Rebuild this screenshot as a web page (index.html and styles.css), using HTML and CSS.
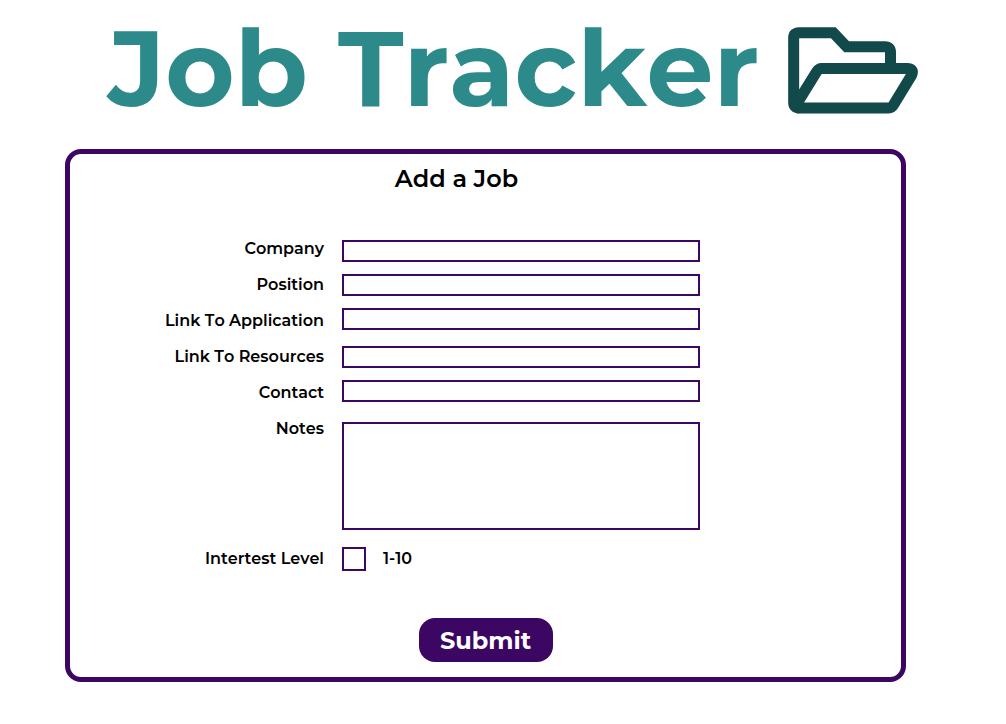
FILE: index.html
```html
<!DOCTYPE html>
<html lang="en">
<head>
<meta charset="utf-8">
<meta name="viewport" content="width=device-width, initial-scale=1">
<title>Job Tracker</title>
<link rel="stylesheet" href="styles.css">
</head>
<body>
<header class="site-header">
  <h1 class="site-title">Job Tracker</h1>
  <svg class="folder-icon" viewBox="24 36 390 261" fill="none" stroke="currentColor" stroke-width="33" aria-hidden="true">
    <path d="M331.500 150V112Q331.500 95.500 315 95.500H200L160 53H57Q41 53 41 69V262Q41 279 57 279"/>
    <path d="M48 270L110 170Q116 160.500 125 160.500H383Q404 162 394 182L341 269Q335 279 326 279H57Z" stroke-linejoin="round"/>
  </svg>
</header>
<main class="card">
  <h2 class="card-title">Add a Job</h2>
  <form class="job-form">
    <div class="fields">
      <div class="labels">
        <label for="company">Company</label>
        <label for="position">Position</label>
        <label for="application">Link To Application</label>
        <label for="resources">Link To Resources</label>
        <label for="contact">Contact</label>
        <label for="notes">Notes</label>
      </div>
      <div class="controls">
        <div class="control-group">
          <input class="control" id="company" type="text">
          <input class="control" id="position" type="text">
          <input class="control" id="application" type="text">
        </div>
        <div class="control-group">
          <input class="control" id="resources" type="text">
          <input class="control" id="contact" type="text">
        </div>
        <textarea class="control notes" id="notes"></textarea>
      </div>
      <label class="interest-label" for="interest">Intertest Level</label>
      <div class="interest">
        <input class="control interest-box" id="interest" type="text" inputmode="numeric">
        <span>1-10</span>
      </div>
    </div>
    <button class="submit" type="submit">Submit</button>
  </form>
</main>
</body>
</html>
```
FILE: styles.css
```css
* { box-sizing: border-box; }

body {
  margin: 0;
  background: #fff;
  color: #000;
  font-family: Montserrat, Inter, "Open Sans", sans-serif;
  font-kerning: none;
}

.site-header {
  display: flex;
  align-items: flex-start;
  gap: 29px;
  padding: 8px 24px 0 108px;
}

.site-title {
  margin: 0;
  color: #2c8b8a;
  font-size: 106px;
  font-weight: 700;
  line-height: 120px;
  white-space: nowrap;
}

.folder-icon {
  flex: none;
  width: 130px;
  margin-top: 19px;
  color: #12494a;
}

.card {
  margin: 21px 100px 40px 65px;
  padding: 8px 0 15px;
  border: 5px solid #3c0663;
  border-radius: 16px;
}

.card-title {
  margin: 0;
  padding-right: 58px;
  font-size: 24px;
  font-weight: 600;
  line-height: 34px;
  text-align: center;
}

.job-form {
  display: flex;
  flex-direction: column;
  align-items: center;
  gap: 47px;
  margin-top: 34px;
}

.fields {
  display: grid;
  grid-template-columns: 254px minmax(0, 358px);
  column-gap: 18px;
  row-gap: 17px;
  width: 100%;
  font-size: 16px;
  font-weight: 600;
  line-height: 36px;
}

.labels {
  display: flex;
  flex-direction: column;
  padding-top: 1px;
  text-align: right;
}

.controls {
  display: flex;
  flex-direction: column;
  gap: 16px;
  padding-top: 10px;
}

.control-group {
  display: flex;
  flex-direction: column;
  gap: 12px;
}

.control {
  width: 100%;
  height: 22px;
  margin: 0;
  padding: 0 4px;
  border: 2px solid #3c0663;
  border-radius: 0;
  background: #fff;
  font: inherit;
  font-size: 14px;
  line-height: 18px;
}

.notes {
  display: block;
  height: 108px;
  margin-top: 4px;
  resize: none;
}

.interest-label {
  line-height: 24px;
  text-align: right;
}

.interest {
  display: flex;
  gap: 17px;
  line-height: 24px;
}

.interest-box {
  width: 24px;
  height: 24px;
}

.submit {
  width: 134px;
  height: 44px;
  padding: 0;
  border: 0;
  border-radius: 16px;
  background: #3c0663;
  color: #fff;
  font: inherit;
  font-size: 24px;
  font-weight: 700;
}
```
